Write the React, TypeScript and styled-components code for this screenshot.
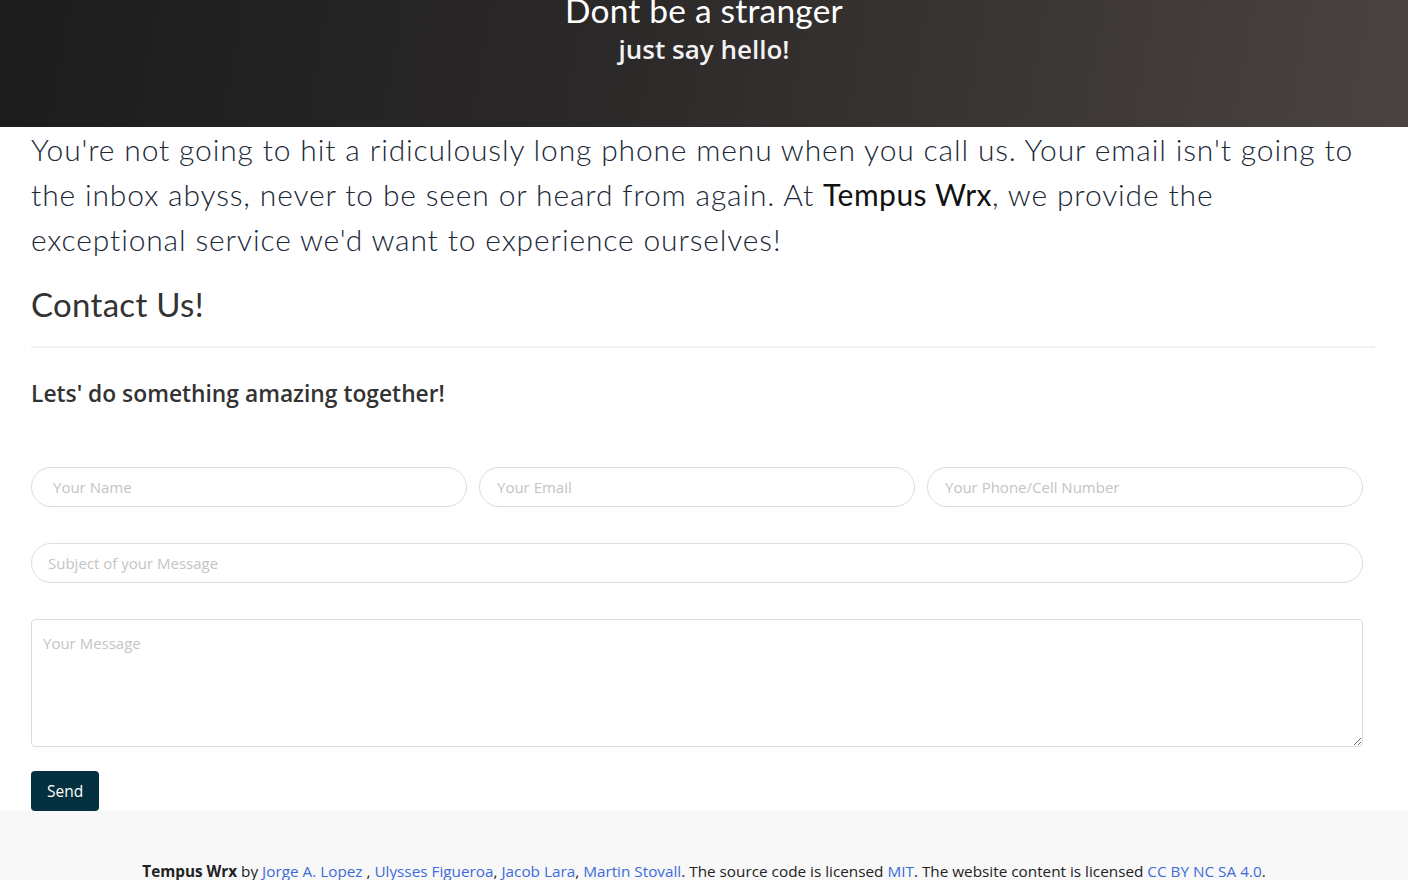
import React from "react";
import styled, { createGlobalStyle } from "styled-components";

const Global = createGlobalStyle`
  html, body { margin: 0; padding: 0; background: #fff; }
  body { font-family: "Open Sans", "Noto Sans", sans-serif; color: #212529; }
  * { box-sizing: border-box; }
`;

const Hero = styled.header`
  height: 127px;
  background: linear-gradient(100deg, #1c1c1c 0%, #2c2a29 45%, #4a4341 100%);
  display: flex;
  flex-direction: column;
  align-items: center;
  overflow: hidden;
`;

const HeroTitle = styled.h1`
  margin: -8px 0 0;
  font-family: "Lato", sans-serif;
  font-weight: 400;
  font-size: 33.5px;
  line-height: 36px;
  letter-spacing: 0.2px;
  color: #fff;
`;

const HeroSub = styled.h2`
  margin: 3px 0 0;
  font-family: "Open Sans", sans-serif;
  font-weight: 600;
  font-size: 26px;
  line-height: 36px;
  color: #f2f2f2;
`;

const Main = styled.main`
  padding: 0 33px 0 31px;
`;

const Lead = styled.p`
  margin: 0;
  font-family: "Lato", sans-serif;
  font-weight: 300;
  font-size: 30px;
  line-height: 45px;
  letter-spacing: 0.85px;
  color: #1a2838;
  strong { font-weight: 400; color: #111; letter-spacing: 0.5px; }
`;

const Title = styled.h2`
  margin: 22px 0 0;
  font-family: "Lato", sans-serif;
  font-weight: 400;
  font-size: 33px;
  line-height: 40px;
  letter-spacing: 0.3px;
  color: #333;
`;

const Rule = styled.hr`
  margin: 22px 0 0;
  border: 0;
  border-top: 2px solid #f1f1f1;
`;

const Tagline = styled.h4`
  margin: 30px 0 0;
  font-family: "Open Sans", sans-serif;
  font-weight: 600;
  font-size: 22.8px;
  line-height: 32px;
  color: #333;
`;

const Form = styled.form`
  width: 1332px;
  margin-top: 57px;
  display: flex;
  flex-direction: column;
  gap: 36px;
`;

const Row = styled.div`
  display: grid;
  grid-template-columns: repeat(3, 1fr);
  gap: 12px;
`;

const Field = styled.input<{ $pad?: number }>`
  height: 40px;
  width: 100%;
  border: 1px solid #ddd;
  border-radius: 20px;
  padding: 0 ${(p) => p.$pad ?? 17}px;
  font-family: "Open Sans", sans-serif;
  font-size: 15px;
  color: #333;
  background: #fff;
  outline: none;
  &::placeholder { color: #c4c4c4; }
`;

const Message = styled.textarea`
  height: 128px;
  width: 100%;
  border: 1px solid #ddd;
  border-radius: 4px;
  padding: 13px 11px;
  font-family: "Open Sans", sans-serif;
  font-size: 15px;
  color: #333;
  outline: none;
  resize: vertical;
  &::placeholder { color: #c4c4c4; }
`;

const SendButton = styled.button`
  margin-top: -12px;
  align-self: flex-start;
  height: 40px;
  padding: 0 16px;
  border: 0;
  border-radius: 4px;
  background: #04303f;
  color: #fff;
  font-family: "Open Sans", sans-serif;
  font-size: 15.5px;
`;

const Footer = styled.footer`
  background: #f8f8f8;
  height: 80px;
  padding-top: 48px;
  text-align: center;
  font-family: "Open Sans", sans-serif;
  font-size: 15.3px;
  line-height: 24px;
  color: #222;
  b { font-weight: 700; }
  a { color: #3d6bd8; text-decoration: none; }
`;

export default function App() {
  return (
    <>
      <Global />
      <Hero>
        <HeroTitle>Dont be a stranger</HeroTitle>
        <HeroSub>just say hello!</HeroSub>
      </Hero>
      <Main>
        <Lead>
          You're not going to hit a ridiculously long phone menu when you call us. Your email isn't going to
          the inbox abyss, never to be seen or heard from again. At <strong>Tempus Wrx</strong>, we provide the
          exceptional service we'd want to experience ourselves!
        </Lead>
        <Title>Contact Us!</Title>
        <Rule />
        <Tagline>Lets' do something amazing together!</Tagline>
        <Form onSubmit={(e) => e.preventDefault()}>
          <Row>
            <Field $pad={21} placeholder="Your Name" />
            <Field placeholder="Your Email" />
            <Field placeholder="Your Phone/Cell Number" />
          </Row>
          <Field $pad={16} placeholder="Subject of your Message" />
          <Message placeholder="Your Message" />
          <SendButton type="submit">Send</SendButton>
        </Form>
      </Main>
      <Footer>
        <b>Tempus Wrx</b> by <a href="#">Jorge A. Lopez</a> , <a href="#">Ulysses Figueroa</a>,{" "}
        <a href="#">Jacob Lara</a>, <a href="#">Martin Stovall</a>. The source code is licensed{" "}
        <a href="#">MIT</a>. The website content is licensed <a href="#">CC BY NC SA 4.0</a>.
      </Footer>
    </>
  );
}
